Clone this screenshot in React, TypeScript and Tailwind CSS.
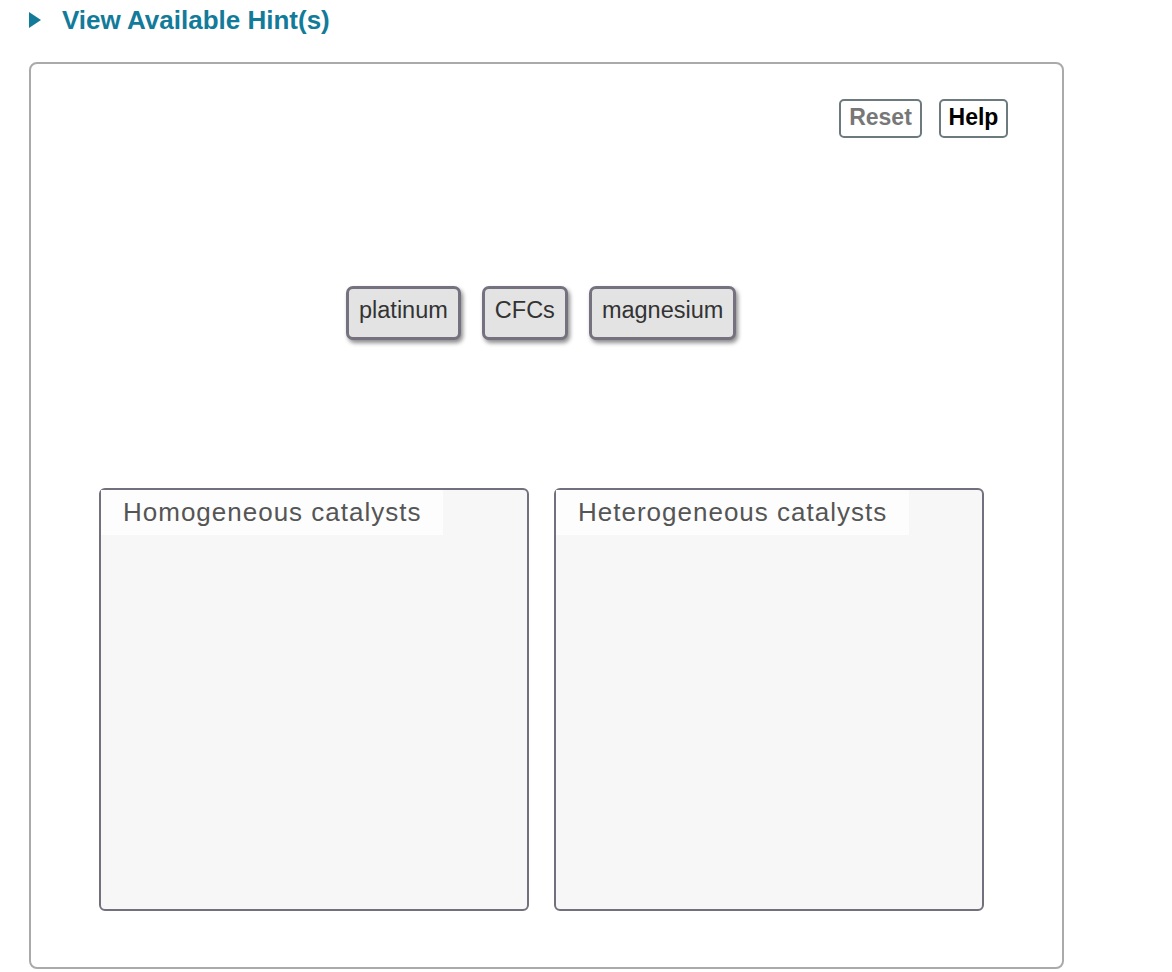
export default function App() {
  const chips = ['platinum', 'CFCs', 'magnesium'];
  const zones = ['Homogeneous catalysts', 'Heterogeneous catalysts'];

  return (
    <div className="min-h-screen bg-white font-['Liberation_Sans',Arial,sans-serif]">
      <div className="flex items-center h-[39px] pl-[29px] pt-[1px]">
        <svg width="12" height="16" viewBox="0 0 12 16" className="shrink-0">
          <path d="M0 0 L12 8 L0 16 Z" fill="#137b9a" />
        </svg>
        <span className="ml-[21px] text-[26px] font-bold text-[#137b9a] leading-none">
          View Available Hint(s)
        </span>
      </div>

      <div className="ml-[29px] mt-[23px] w-[1035px] h-[907px] border-2 border-[#aaaaaa] rounded-[8px] flex flex-col">
        <div className="flex justify-end gap-[17px] pt-[35px] pr-[54px]">
          <button className="h-[39px] w-[83px] border-2 border-[#6c7a80] rounded-[5px] text-[23px] font-bold text-[#777777] leading-none pb-[2px]">
            Reset
          </button>
          <button className="h-[39px] w-[69px] border-2 border-[#6c7a80] rounded-[5px] text-[23px] font-bold text-black leading-none pb-[2px]">
            Help
          </button>
        </div>

        <div className="flex gap-[21px] pl-[315px] mt-[148px]">
          {chips.map((c) => (
            <div
              key={c}
              className="h-[54px] px-[10px] pb-[5px] flex items-center border-[3px] border-[#75717f] rounded-[7px] bg-[#e3e3e3] text-[23.5px] text-[#333333] shadow-[2px_3px_4px_rgba(0,0,0,0.45)]"
            >
              {c}
            </div>
          ))}
        </div>

        <div className="flex gap-[25px] pl-[68px] mt-[148px]">
          {zones.map((z) => (
            <div
              key={z}
              className="w-[430px] h-[423px] border-[2.5px] border-[#73707e] rounded-[6px] bg-[#f7f7f7] flex flex-col items-start"
            >
              <div className="h-[45px] pl-[22px] pr-[22px] whitespace-nowrap bg-[#fdfdfd] flex items-center text-[26px] tracking-[1px] text-[#555555]">
                {z}
              </div>
            </div>
          ))}
        </div>
      </div>
    </div>
  );
}
